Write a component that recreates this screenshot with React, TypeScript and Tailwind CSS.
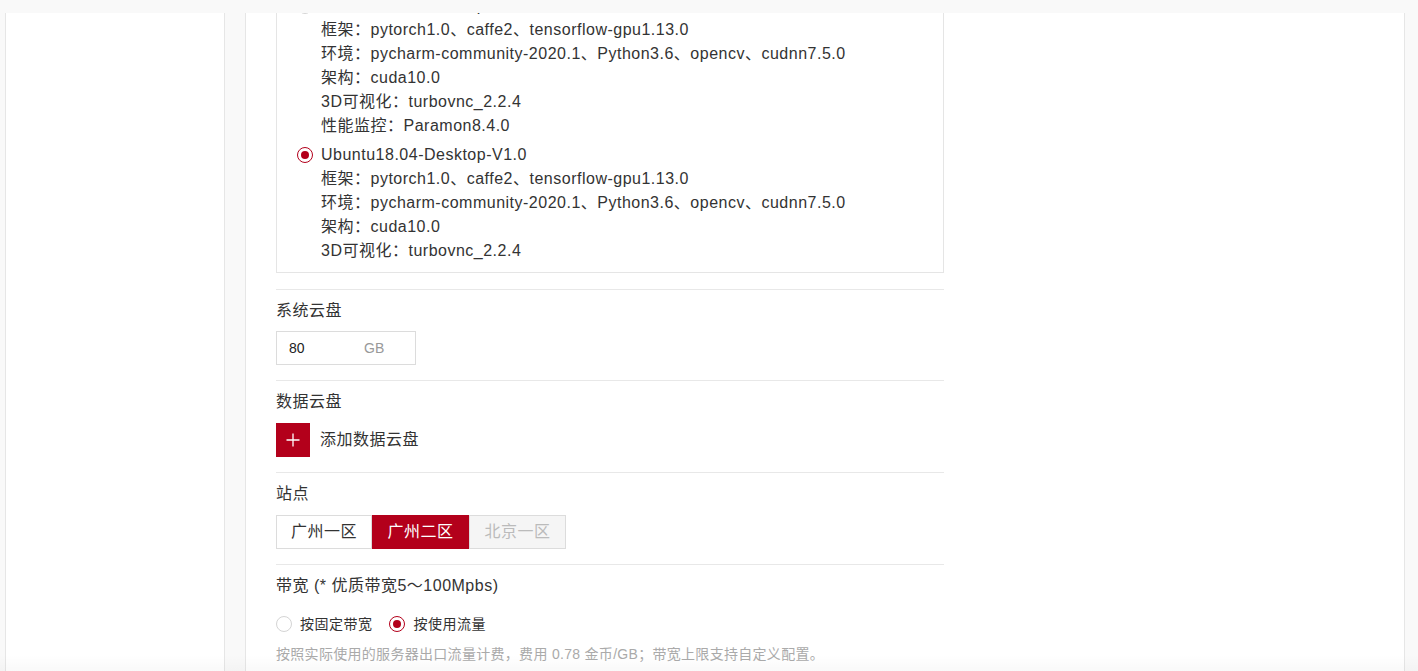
import React from "react";

const RED = "bg-[#b3001b]";

function Radio({ checked }: { checked: boolean }) {
  return checked ? (
    <span className="flex h-4 w-4 shrink-0 items-center justify-center rounded-full border border-[#b3001b] bg-white">
      <span className="h-2 w-2 rounded-full bg-[#b3001b]" />
    </span>
  ) : (
    <span className="h-4 w-4 shrink-0 rounded-full border border-[#d4d4d4] bg-white" />
  );
}

function ImageOption({
  name,
  checked,
  lines,
}: {
  name: string;
  checked: boolean;
  lines: string[];
}) {
  return (
    <div className="flex flex-col">
      <div className="flex h-6 items-center gap-2">
        <Radio checked={checked} />
        <span>{name}</span>
      </div>
      {lines.map((l) => (
        <div key={l} className="h-6 pl-6 leading-6">
          {l}
        </div>
      ))}
    </div>
  );
}

function Section({
  title,
  tight,
  children,
}: {
  title: string;
  tight?: boolean;
  children: React.ReactNode;
}) {
  return (
    <div className="flex flex-col border-t border-[#e8e8e8] pt-[9px] pb-[15px]">
      <div className="h-6 leading-6">{title}</div>
      <div className={tight ? "mt-[8px]" : "mt-[9px]"}>{children}</div>
    </div>
  );
}

export default function App() {
  const common = [
    "框架：pytorch1.0、caffe2、tensorflow-gpu1.13.0",
    "环境：pycharm-community-2020.1、Python3.6、opencv、cudnn7.5.0",
    "架构：cuda10.0",
    "3D可视化：turbovnc_2.2.4",
  ];
  return (
    <div
      className="relative flex h-[671px] w-[1418px] flex-col overflow-hidden bg-[#f9f9f9] text-[16px] tracking-[0.5px] text-[#333]"
      style={{ fontFamily: '"Liberation Sans", "Noto Sans CJK SC", sans-serif' }}
    >
      <div className="h-[13px] shrink-0" />
      <div className="flex min-h-0 flex-1">
        <div className="ml-[5px] w-[220px] shrink-0 border-x border-[#e6e6e6] bg-white" />
        <div className="ml-[20px] w-[1160px] shrink-0 overflow-hidden border-x border-[#e6e6e6] bg-white pl-[30px]">
          <div className="-mt-[30px] flex w-[668px] flex-col">
            <div className="border border-[#e5e5e5] px-5 pt-[10px] pb-[9px]">
              <div className="flex flex-col gap-[5px]">
                <ImageOption
                  name="Ubuntu18.04-Desktop-V1.1"
                  checked={false}
                  lines={[...common, "性能监控：Paramon8.4.0"]}
                />
                <ImageOption name="Ubuntu18.04-Desktop-V1.0" checked={true} lines={common} />
              </div>
            </div>
            <div className="h-4" />
            <Section title="系统云盘" tight>
              <div className="flex h-[34px] w-[140px] items-center border border-[#dcdcdc] pl-3 text-[14px] tracking-normal">
                <span className="w-[75px] text-[#222]">80</span>
                <span className="text-[#999]">GB</span>
              </div>
            </Section>
            <Section title="数据云盘">
              <div className="flex items-center gap-[10px]">
                <div className={`flex h-[34px] w-[34px] items-center justify-center ${RED}`}>
                  <svg width="14" height="14" viewBox="0 0 14 14">
                    <path d="M7 0.5V13.5M0.5 7H13.5" stroke="#fff" strokeWidth="1.3" />
                  </svg>
                </div>
                <span>添加数据云盘</span>
              </div>
            </Section>
            <Section title="站点">
              <div className="flex h-[34px]">
                <div className="flex w-[96px] items-center justify-center border border-[#dcdcdc] bg-white">
                  广州一区
                </div>
                <div className={`flex w-[97px] items-center justify-center text-white ${RED}`}>
                  广州二区
                </div>
                <div className="flex w-[97px] items-center justify-center border border-[#dcdcdc] bg-[#f5f5f5] text-[#bbb]">
                  北京一区
                </div>
              </div>
            </Section>
            <div className="flex flex-col border-t border-[#e8e8e8] pt-[9px]">
              <div className="h-6 leading-6">带宽 (* 优质带宽5～100Mpbs)</div>
              <div className="mt-[14px] flex h-6 items-center text-[14px]">
                <Radio checked={false} />
                <span className="ml-2">按固定带宽</span>
                <span className="ml-[16px]">
                  <Radio checked={true} />
                </span>
                <span className="ml-[9px]">按使用流量</span>
              </div>
              <div className="mt-2 h-5 text-[14px] leading-5 tracking-[0.3px] text-[#aaa]">
                按照实际使用的服务器出口流量计费，费用 0.78 金币/GB；带宽上限支持自定义配置。
              </div>
            </div>
          </div>
        </div>
      </div>
      <div className="pointer-events-none absolute inset-x-0 bottom-0 h-[16px] bg-gradient-to-b from-transparent to-[rgba(0,0,0,0.025)]" />
    </div>
  );
}
